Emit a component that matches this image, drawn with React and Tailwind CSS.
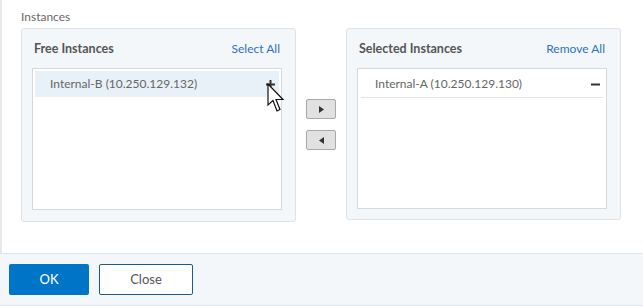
import React from "react";

const Plus = () => (
  <svg width="9" height="9" viewBox="0 0 9 9" className="block">
    <rect x="3.5" y="0" width="2" height="9" fill="#333" />
    <rect x="0" y="3.5" width="9" height="2" fill="#333" />
  </svg>
);

const Minus = () => (
  <svg width="9" height="9" viewBox="0 0 9 9" className="block">
    <rect x="0" y="3.5" width="9" height="2" fill="#333" />
  </svg>
);

const Cursor = () => (
  <svg width="18" height="31" viewBox="0 0 18 31" className="block">
    <path
      d="M1 1 L1 22 L6 17.5 L10 28 L13 26.5 L9 16.5 L16 16.5 Z"
      fill="#fff"
      stroke="#111"
      strokeWidth="1.2"
      strokeLinejoin="miter"
    />
  </svg>
);

const Panel = ({ title, action, children, height, listHeight }) => (
  <div
    className={`w-[275px] ${height} rounded-[3px] border border-[#dfe3e7] bg-[#f4f7fa] pl-[10px] pr-[13px] pt-[10px] flex flex-col`}
  >
    <div className="flex items-center justify-between h-[20px] pl-[2px]">
      <span className="text-[12.5px] font-bold text-[#555]">{title}</span>
      <span className="text-[12px] text-[#2f72b8] mr-[2px]">{action}</span>
    </div>
    <div className={`mt-[9px] ${listHeight} border border-[#d8d8d8] bg-white p-[2px]`}>
      {children}
    </div>
  </div>
);

export default function App() {
  return (
    <div
      className="w-[643px] h-[306px] bg-white overflow-hidden"
      style={{ fontFamily: "Lato, 'Liberation Sans', sans-serif" }}
    >
      <div className="h-[253px] border-l-2 border-[#e6e9ec] pl-[19px] pt-[9px]">
        <div className="text-[12px] leading-[16px] text-[#6d6868]">Instances</div>
        <div className="flex items-start mt-[3px]">
          <Panel
            title="Free Instances"
            action="Select All"
            height="h-[194px]"
            listHeight="h-[142px]"
          >
            <div className="relative h-[26px] bg-[#e8f1f8] flex items-center justify-between pl-[15px] pr-[4px]">
              <span className="text-[12px] text-[#666]">Internal-B (10.250.129.132)</span>
              <Plus />
              <div className="absolute left-[232px] top-[12px]">
                <Cursor />
              </div>
            </div>
          </Panel>

          <div className="w-[50px] flex flex-col items-center pt-[71px] gap-[11px]">
            <button className="w-[30px] h-[20px] rounded-[2px] border border-[#a9a9a9] bg-[#e1e1e1] flex items-center justify-center">
              <svg width="5" height="7" viewBox="0 0 5 7" className="block">
                <path d="M0 0 L5 3.5 L0 7 Z" fill="#333" />
              </svg>
            </button>
            <button className="w-[30px] h-[20px] rounded-[2px] border border-[#a9a9a9] bg-[#e1e1e1] flex items-center justify-center">
              <svg width="5" height="7" viewBox="0 0 5 7" className="block">
                <path d="M5 0 L0 3.5 L5 7 Z" fill="#333" />
              </svg>
            </button>
          </div>

          <Panel
            title="Selected Instances"
            action="Remove All"
            height="h-[192px]"
            listHeight="h-[141px]"
          >
            <div className="h-[27px] border-b border-[#e4e4e4] mx-[1px] flex items-center justify-between pl-[14px] pr-[3px]">
              <span className="text-[12px] text-[#666]">Internal-A (10.250.129.130)</span>
              <Minus />
            </div>
          </Panel>
        </div>
      </div>
      <div className="h-[53px] border-t border-b border-[#dfe4e8] bg-[#f4f7fa] flex items-center gap-[10px] pl-[9px]">
        <button className="w-[80px] h-[31px] rounded-[2px] bg-[#0075c7] text-white text-[13px]">
          OK
        </button>
        <button className="w-[94px] h-[31px] rounded-[2px] border border-[#1f5a8e] bg-white text-[#555] text-[13px]">
          Close
        </button>
      </div>
    </div>
  );
}
